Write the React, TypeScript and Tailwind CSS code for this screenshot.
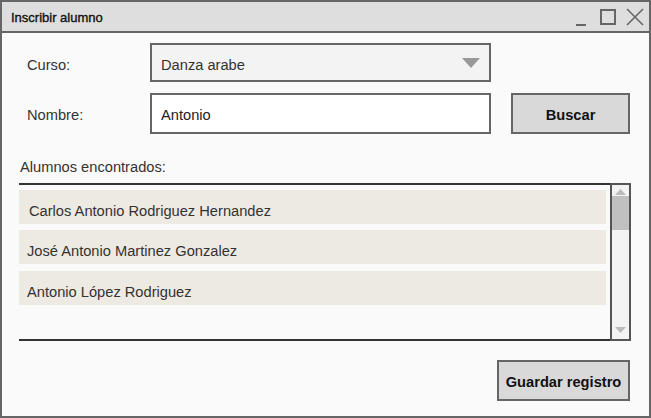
import React from "react";

export default function App() {
  const rows = [
    { name: "Carlos Antonio Rodriguez Hernandez", pl: "pl-[10px]" },
    { name: "José Antonio Martinez Gonzalez", pl: "pl-[8px]" },
    { name: "Antonio López Rodriguez", pl: "pl-[8px]" },
  ];
  return (
    <div
      className="w-[651px] h-[418px] border-2 border-[#666] bg-[#fafafa] flex flex-col text-[#333]"
      style={{ fontFamily: '"Liberation Sans", Arial, sans-serif' }}
    >
      {/* title bar */}
      <div className="h-[31px] shrink-0 bg-[#dedede] border-b-2 border-[#666] flex items-center justify-between pl-[9px] pr-[4px]">
        <span className="text-[13px] pt-[2px] text-[#111] [-webkit-text-stroke:0.35px_#111]">Inscribir alumno</span>
        <div className="flex items-center gap-[8px]">
          <svg width="18" height="18" viewBox="0 0 18 18" className="mt-[2px]">
            <line x1="3" y1="16" x2="13" y2="16" stroke="#666" strokeWidth="2" />
          </svg>
          <svg width="18" height="18" viewBox="0 0 18 18">
            <rect x="2" y="2" width="14" height="14" fill="none" stroke="#666" strokeWidth="2" />
          </svg>
          <svg width="20" height="20" viewBox="0 0 20 20">
            <line x1="2" y1="2" x2="18" y2="18" stroke="#666" strokeWidth="1.6" />
            <line x1="18" y1="2" x2="2" y2="18" stroke="#666" strokeWidth="1.6" />
          </svg>
        </div>
      </div>

      {/* content */}
      <div className="flex-1 flex flex-col text-[14.67px]">
        {/* Curso row */}
        <div className="flex items-center mt-[10px]">
          <span className="w-[148px] pl-[25px] pt-[4px]">Curso:</span>
          <div className="w-[341px] h-[39px] border-2 border-[#666] bg-[#f3f3f3] flex items-center justify-between pl-[9px] pr-[9px]">
            <span className="text-[#333] pt-[4px]">Danza arabe</span>
            <svg width="18" height="10" viewBox="0 0 18 10">
              <polygon points="0,0 18,0 9,10" fill="#999" />
            </svg>
          </div>
        </div>

        {/* Nombre row */}
        <div className="flex items-center mt-[11px]">
          <span className="w-[148px] pl-[25px] pt-[2px]">Nombre:</span>
          <div className="w-[341px] h-[41px] border-2 border-[#666] bg-white flex items-center pl-[9px]">
            <span className="text-[#222] pt-[2px]">Antonio</span>
          </div>
          <button className="ml-[20px] w-[119px] h-[41px] pt-[2px] border-2 border-[#666] bg-[#d9d9d9] font-bold text-[#111]">
            Buscar
          </button>
        </div>

        <div className="mt-[25px] pl-[18px] leading-[16px]">Alumnos encontrados:</div>

        {/* list */}
        <div className="ml-[17px] mt-[8px] w-[612px] h-[158px] flex">
          <div className="flex-1 flex flex-col border-t-2 border-b-2 border-[#333]">
            <div className="flex flex-col pt-[5px] gap-[6px] pr-[4px]">
              {rows.map((r, i) => (
                <div
                  key={i}
                  className={`h-[34px] pt-[7px] bg-[#ede9e3] flex items-center text-[#333] ${r.pl} ${i === 2 ? "mt-[1px]" : ""}`}
                >
                  {r.name}
                </div>
              ))}
            </div>
          </div>
          <div className="w-[21px] border-2 border-[#555] bg-[#f3f3f3] flex flex-col">
            <div className="h-[11px] flex items-center justify-center pt-[3px]">
              <svg width="11" height="6" viewBox="0 0 11 6">
                <polygon points="0,6 11,6 5.5,0" fill="#bbb" />
              </svg>
            </div>
            <div className="h-[34px] bg-[#c0c0c0]" />
            <div className="flex-1" />
            <div className="h-[12px] flex items-start justify-center">
              <svg width="11" height="6" viewBox="0 0 11 6">
                <polygon points="0,0 11,0 5.5,6" fill="#bbb" />
              </svg>
            </div>
          </div>
        </div>

        <div className="flex justify-end pr-[19px] mt-[19px]">
          <button className="w-[133px] h-[41px] pt-[2px] border-2 border-[#666] bg-[#d9d9d9] font-bold text-[#111]">
            Guardar registro
          </button>
        </div>
      </div>
    </div>
  );
}
